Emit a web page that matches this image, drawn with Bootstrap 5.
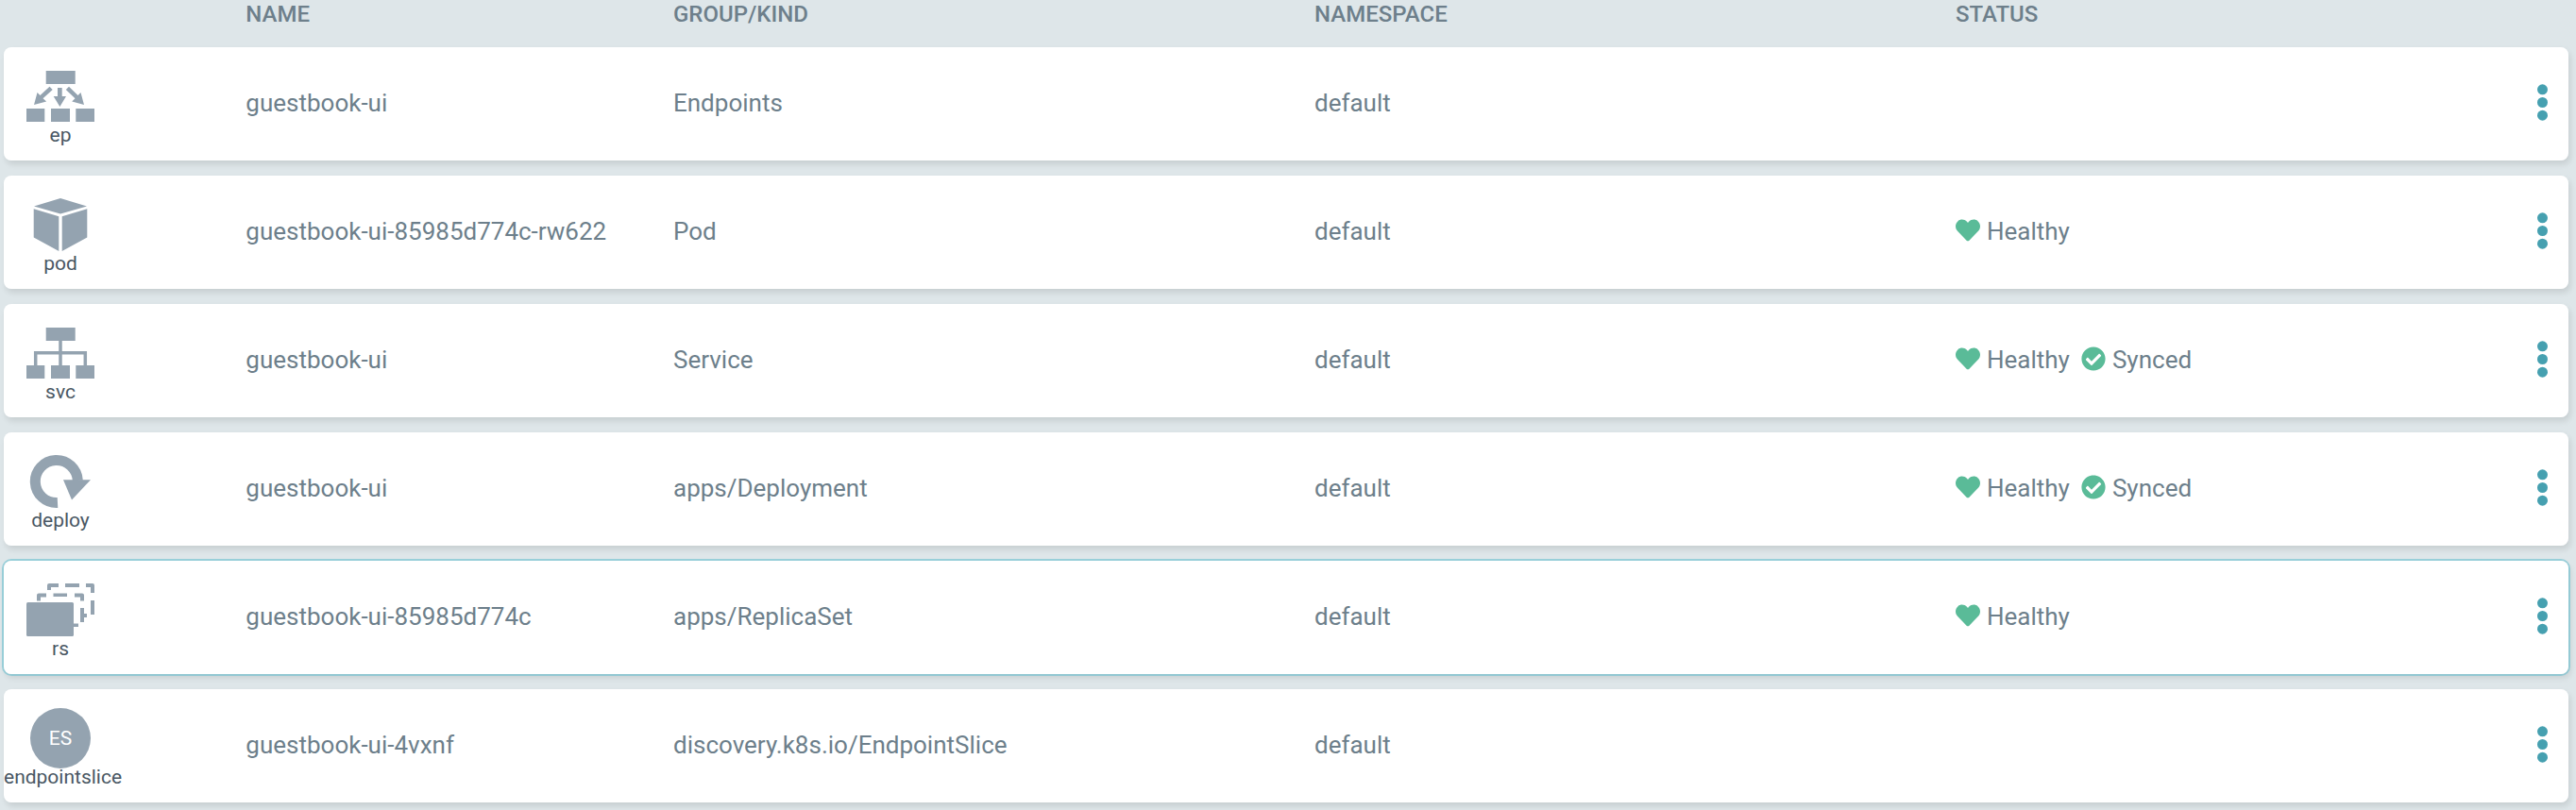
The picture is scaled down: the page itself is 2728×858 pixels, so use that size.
<!DOCTYPE html>
<html lang="en">
<head>
<meta charset="utf-8">
<meta name="viewport" content="width=device-width, initial-scale=1">
<title>Application resources</title>
<link rel="stylesheet" href="https://cdn.jsdelivr.net/npm/bootstrap@5.3.0/dist/css/bootstrap.min.css">
<style>
  body { background: #dee6e9; color: #6d7f8b; font-family: Roboto, "Liberation Sans", sans-serif; font-size: 26px; line-height: 36px; }
  main { padding: 0 8px 8px 4px; }
  /* row spacing also adds a strip above and below the table, pulled back here */
  .resources { table-layout: fixed; border-collapse: separate; border-spacing: 0 16px; margin: -16px 0; }
  .resources th { height: 34px; padding: 0 30px; font-size: 24px; line-height: 30px; font-weight: 500; text-transform: uppercase; vertical-align: top; }
  .resources td { height: 120px; padding: 0 30px 2px; background: #fff; vertical-align: middle; white-space: nowrap; }
  .resources tbody tr { border-radius: 8px; box-shadow: 2px 4px 6px rgba(0, 0, 0, .1); }
  .resources tbody tr.active-item { box-shadow: 0 0 0 2px rgba(107, 192, 206, .6), 2px 4px 6px rgba(0, 0, 0, .1); }
  .resources td:first-child { border-radius: 8px 0 0 8px; padding: 0; }
  .resources td:last-child { border-radius: 0 8px 8px 0; padding-right: 20px; }
  .col-icon { width: 8.3333%; }
  .col-title { width: 16.6667%; }
  .col-wide { width: 25%; }
  .kind { width: 120px; height: 120px; padding-top: 20px; }
  .kind svg { width: 72px; height: 64px; fill: #94a3b0; color: #94a3b0; display: block; margin: 0 auto; }
  .kind-label { color: #495763; font-size: 21px; line-height: 18px; }
  .initials { width: 64px; height: 64px; background: #94a3b0; color: #fff; font-size: 21px; }
  .state { gap: 7px; }
  .state + .state { margin-left: 12px; }
  .state svg { width: 26px; height: 26px; fill: #5abb98; margin-bottom: 2px; }
  .kebab { width: 15px; padding: 0 0 2px; line-height: 1; }
  .kebab svg { width: 11px; height: 39px; fill: #46a0b0; display: block; margin: auto; }
</style>
</head>
<body>
<svg class="d-none" aria-hidden="true">
  <symbol id="i-ep" viewBox="0 0 72 64">
    <path d="M20.700 5h31v14h-31zM0 45h19.300v14H0zM26 45h20v14H26zM52.300 45H72v14H52.300zM33 23h4.700v9H42l-6.600 11L28.700 32H33zM24.500 21.700l3.200 3.200L17.500 34.300l3.700 3.200L8 41l3.500-13 3 3zM45 21.700l-3.200 3.200L51.500 34.300l-3.300 3.200L61 41l-3.500-13-3 3z"/>
  </symbol>
  <symbol id="i-pod" viewBox="0 0 72 64">
    <path d="M36 4l28 8.500L36 20.500 8 12.500zM7.700 15.200l26.600 8v36.800L7.700 45.500zM64.300 15.200l-26.600 8v36.800L64.300 45.500z"/>
  </symbol>
  <symbol id="i-svc" viewBox="0 0 72 64">
    <path d="M20.700 5h31v14h-31zM0 45h19.300v14H0zM26 45h20v14H26zM52.300 45H72v14H52.300z"/>
    <path d="M36 19v26M9.700 45V31.700h52.600V45" fill="none" stroke="currentColor" stroke-width="3.500"/>
  </symbol>
  <symbol id="i-deploy" viewBox="0 0 72 64">
    <path d="M33 54.500A22.500 22.500 0 1 1 54.300 31" fill="none" stroke="currentColor" stroke-width="11"/>
    <path d="M39 30.300h29L48 51.500z"/>
  </symbol>
  <symbol id="i-rs" viewBox="0 0 72 64">
    <rect x="0" y="24" width="50" height="36" rx="1.500"/>
    <path d="M22 11V6q0-2 2-2h10v4h-8v3zM41 4h15v4H41zM63 4h7q2 0 2 2v8h-4V8h-5zM68 22h4v15h-4zM11 22.500v-6q0-2 2-2h8v4h-6v4zM28.500 14.500H43v3.500H28.500zM51 14.500h8q2 0 2 2v6h-4v-4h-6zM57 30h4v6h3v4h-3v5h-4zM50 46.500h5v3.500h-5z"/>
  </symbol>
  <symbol id="i-heart" viewBox="0 0 512 512">
    <path d="M462.300 62.600C407.500 15.900 326 24.300 275.700 76.200L256 96.500l-19.700-20.300C186.100 24.300 104.500 15.900 49.700 62.600c-62.800 53.600-66.100 149.800-9.900 207.900l193.500 199.800c12.500 12.900 32.800 12.900 45.300 0l193.500-199.800c56.300-58.100 53-154.300-9.800-207.900z"/>
  </symbol>
  <symbol id="i-check" viewBox="0 0 512 512">
    <path d="M504 256c0 137-111 248-248 248S8 393 8 256 119 8 256 8s248 111 248 248zM227.300 387.300l184-184c6.200-6.200 6.200-16.400 0-22.600l-22.600-22.600c-6.200-6.200-16.400-6.200-22.600 0L216 308.100l-70.100-70.100c-6.200-6.200-16.400-6.200-22.600 0l-22.600 22.600c-6.200 6.200-6.200 16.400 0 22.600l104 104c6.200 6.200 16.400 6.200 22.600.1z"/>
  </symbol>
  <symbol id="i-dots" viewBox="0 0 11 39">
    <circle cx="5.500" cy="5.800" r="5.500"/><circle cx="5.500" cy="19.500" r="5.500"/><circle cx="5.500" cy="33.200" r="5.500"/>
  </symbol>
</svg>

<main>
  <table class="resources w-100">
    <colgroup><col class="col-icon"><col class="col-title"><col class="col-wide"><col class="col-wide"><col class="col-wide"></colgroup>
    <thead>
      <tr><th></th><th scope="col">Name</th><th scope="col">Group/Kind</th><th scope="col">Namespace</th><th scope="col">Status</th></tr>
    </thead>
    <tbody>
      <tr>
        <td><div class="kind text-center"><svg aria-hidden="true"><use href="#i-ep"/></svg><div class="kind-label">ep</div></div></td>
        <td>guestbook-ui</td><td>Endpoints</td><td>default</td>
        <td><div class="d-flex align-items-center">
          <button type="button" class="btn border-0 kebab ms-auto" aria-label="Actions"><svg aria-hidden="true"><use href="#i-dots"/></svg></button>
        </div></td>
      </tr>
      <tr>
        <td><div class="kind text-center"><svg aria-hidden="true"><use href="#i-pod"/></svg><div class="kind-label">pod</div></div></td>
        <td>guestbook-ui-85985d774c-rw622</td><td>Pod</td><td>default</td>
        <td><div class="d-flex align-items-center">
          <span class="state d-flex align-items-center"><svg aria-hidden="true"><use href="#i-heart"/></svg>Healthy</span>
          <button type="button" class="btn border-0 kebab ms-auto" aria-label="Actions"><svg aria-hidden="true"><use href="#i-dots"/></svg></button>
        </div></td>
      </tr>
      <tr>
        <td><div class="kind text-center"><svg aria-hidden="true"><use href="#i-svc"/></svg><div class="kind-label">svc</div></div></td>
        <td>guestbook-ui</td><td>Service</td><td>default</td>
        <td><div class="d-flex align-items-center">
          <span class="state d-flex align-items-center"><svg aria-hidden="true"><use href="#i-heart"/></svg>Healthy</span>
          <span class="state d-flex align-items-center"><svg aria-hidden="true"><use href="#i-check"/></svg>Synced</span>
          <button type="button" class="btn border-0 kebab ms-auto" aria-label="Actions"><svg aria-hidden="true"><use href="#i-dots"/></svg></button>
        </div></td>
      </tr>
      <tr>
        <td><div class="kind text-center"><svg aria-hidden="true"><use href="#i-deploy"/></svg><div class="kind-label">deploy</div></div></td>
        <td>guestbook-ui</td><td>apps/Deployment</td><td>default</td>
        <td><div class="d-flex align-items-center">
          <span class="state d-flex align-items-center"><svg aria-hidden="true"><use href="#i-heart"/></svg>Healthy</span>
          <span class="state d-flex align-items-center"><svg aria-hidden="true"><use href="#i-check"/></svg>Synced</span>
          <button type="button" class="btn border-0 kebab ms-auto" aria-label="Actions"><svg aria-hidden="true"><use href="#i-dots"/></svg></button>
        </div></td>
      </tr>
      <tr class="active-item">
        <td><div class="kind text-center"><svg aria-hidden="true"><use href="#i-rs"/></svg><div class="kind-label">rs</div></div></td>
        <td>guestbook-ui-85985d774c</td><td>apps/ReplicaSet</td><td>default</td>
        <td><div class="d-flex align-items-center">
          <span class="state d-flex align-items-center"><svg aria-hidden="true"><use href="#i-heart"/></svg>Healthy</span>
          <button type="button" class="btn border-0 kebab ms-auto" aria-label="Actions"><svg aria-hidden="true"><use href="#i-dots"/></svg></button>
        </div></td>
      </tr>
      <tr>
        <td><div class="kind text-center"><div class="initials rounded-circle d-flex align-items-center justify-content-center mx-auto">ES</div><div class="kind-label">endpointslice</div></div></td>
        <td>guestbook-ui-4vxnf</td><td>discovery.k8s.io/EndpointSlice</td><td>default</td>
        <td><div class="d-flex align-items-center">
          <button type="button" class="btn border-0 kebab ms-auto" aria-label="Actions"><svg aria-hidden="true"><use href="#i-dots"/></svg></button>
        </div></td>
      </tr>
    </tbody>
  </table>
</main>
<script src="https://cdn.jsdelivr.net/npm/bootstrap@5.3.0/dist/js/bootstrap.bundle.min.js"></script>
</body>
</html>
